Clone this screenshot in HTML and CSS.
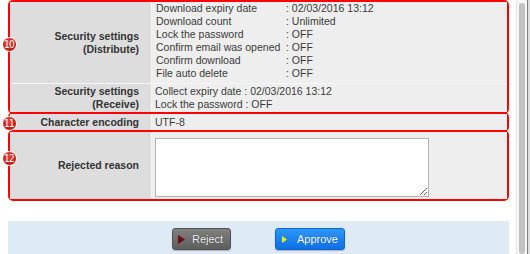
FILE: index.html
```html
<!DOCTYPE html>
<html lang="en">
<head>
  <meta charset="UTF-8">
  <title>Approval request</title>
  <link rel="stylesheet" href="styles.css">
</head>

<body>
  <div class="page">
    <div class="mark-group">
      <span class="mark-num num-10">10</span>
      <div class="form-row row-distribute">
        <div class="form-label">Security settings<br>(Distribute)</div>
        <div class="form-value">
          <div class="setting-list">
            <span>Download expiry date</span><span>: 02/03/2016 13:12</span>
            <span>Download count</span><span>: Unlimited</span>
            <span>Lock the password</span><span>: OFF</span>
            <span>Confirm email was opened</span><span>: OFF</span>
            <span>Confirm download</span><span>: OFF</span>
            <span>File auto delete</span><span>: OFF</span>
          </div>
        </div>
      </div>
      <div class="form-row row-receive">
        <div class="form-label">Security settings<br>(Receive)</div>
        <div class="form-value">Collect expiry date : 02/03/2016 13:12<br>Lock the password : OFF</div>
      </div>
    </div>

    <div class="mark-group">
      <span class="mark-num num-11">11</span>
      <div class="form-row row-encoding">
        <div class="form-label">Character encoding</div>
        <div class="form-value">UTF-8</div>
      </div>
    </div>

    <div class="mark-group">
      <span class="mark-num num-12">12</span>
      <div class="form-row">
        <div class="form-label">Rejected reason</div>
        <div class="form-value">
          <textarea class="reason-input"></textarea>
        </div>
      </div>
    </div>

    <div class="action-bar">
      <button class="btn btn-reject">
        <svg width="7" height="9" viewBox="0 0 7 9"><path d="M0 0 L7 4.5 L0 9 Z" fill="#6e0d0d"/></svg>Reject
      </button>
      <button class="btn btn-approve">
        <svg width="5" height="7" viewBox="0 0 5 7"><path d="M0 0 L5 3.5 L0 7 Z" fill="#ffe81a"/></svg>Approve
      </button>
    </div>
  </div>

  <div class="scrollbar">
    <div class="scroll-track"><div class="scroll-thumb"></div></div>
    <div class="window-edge"></div>
  </div>
</body>
</html>
```

FILE: styles.css
```css
html, body {
  margin: 0;
  height: 100%;
  overflow: hidden;
  background: #fff;
}
*,
*::before,
*::after {
  box-sizing: border-box;
}
body {
  display: flex;
  font-family: 'Liberation Sans', Helvetica, Arial, sans-serif;
  font-size: 10.5px;
  color: #3a3a3a;
}
.page {
  flex: 1;
  padding: 0 7px 0 8px;
}

/* red annotation boxes, stacked so the borders overlap */
.mark-group {
  position: relative;
  display: grid;
  gap: 1px;
  border: 2px solid #f00;
  border-radius: 5px;
  background: #f7f7f7;
}
.mark-group + .mark-group {
  margin-top: -2px;
}
.mark-num {
  position: absolute;
  left: -8px;
  z-index: 5;
  width: 15px;
  height: 15px;
  border: 1px solid #fff;
  border-radius: 50%;
  background: radial-gradient(circle at 40% 35%, #e8453a, #c21a12 70%);
  color: #fff;
  font-family: 'DejaVu Sans Condensed', 'Liberation Sans', sans-serif;
  font-size: 10px;
  letter-spacing: -0.8px;
  line-height: 13px;
  text-align: center;
  text-indent: -1px;
}
.num-10 { top: 35px; }
.num-11 { top: 2px; }
.num-12 { top: 19px; }

.form-row {
  display: grid;
  grid-template-columns: 141px 1fr;
  gap: 1px;
  line-height: 13px;
}
.form-label {
  display: flex;
  align-items: center;
  justify-content: flex-end;
  padding-right: 12px;
  text-align: right;
  font-weight: bold;
  color: #333;
  background: #dddddd;
}
.form-value {
  padding-left: 3px;
  background: #eeeeee;
}
.row-distribute .form-value {
  padding-bottom: 3px;
}
.row-receive .form-value {
  padding-top: 1px;
  padding-bottom: 1px;
}
.row-encoding .form-value {
  padding-top: 2px;
  padding-bottom: 1px;
}
.setting-list {
  display: grid;
  grid-template-columns: 130px 1fr;
  padding-left: 1px;
}
.reason-input {
  display: block;
  width: 274px;
  height: 59px;
  margin: 6px 0 2px;
  border: 1px solid #b3b3b3;
  background: #fff;
}

.action-bar {
  display: flex;
  justify-content: center;
  gap: 44px;
  margin-top: 20px;
  padding: 7px 0;
  background: #dfeaf7;
}
.btn {
  display: inline-flex;
  align-items: center;
  height: 22px;
  padding: 0 0 0 5px;
  border-radius: 3px;
  font-family: 'Liberation Sans', Helvetica, Arial, sans-serif;
  font-size: 11px;
  box-shadow: 0 1px 1px rgba(0,0,0,.25);
}
.btn-reject {
  width: 59px;
  border: 1px solid #525252;
  background: linear-gradient(#808080, #5e5e5e);
  color: #f2f2f2;
  text-shadow: 0 0 1px rgba(0,0,0,.7);
}
.btn-reject svg {
  margin-right: 7px;
}
.btn-approve {
  width: 70px;
  border: 1px solid #0f63cc;
  background: linear-gradient(#2c97f9, #0c70e4);
  color: #fff;
  text-shadow: 0 0 1px rgba(0,40,120,.6);
}
.btn-approve svg {
  margin-left: 1px;
  margin-right: 10px;
}

/* window scrollbar on the right */
.scrollbar {
  display: flex;
  width: 14px;
}
.scroll-track {
  width: 11px;
  padding: 3px 2px 0 2px;
  border-left: 1px solid #e6e6e6;
  background: #f7f7f7;
}
.scroll-thumb {
  height: 100%;
  border-radius: 3px;
  background: #c2c2c2;
}
.window-edge {
  width: 3px;
  border-left: 1px solid #7f7f7f;
  background: #dcdcdc;
}
```
